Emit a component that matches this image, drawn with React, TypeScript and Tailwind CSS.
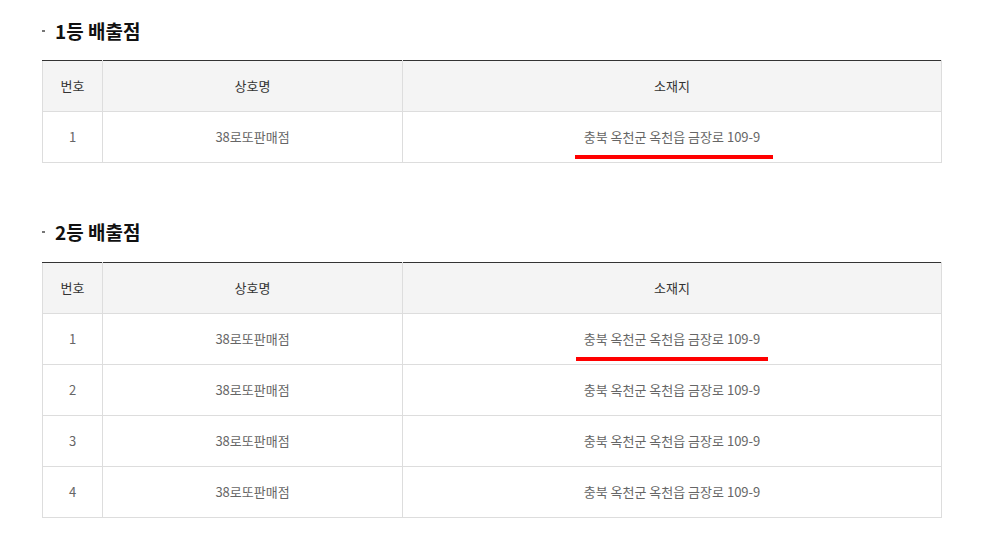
const rows2 = ["1", "2", "3", "4"];

function StoreTable({ rows, marks }: { rows: string[]; marks: Record<string, string> }) {
  return (
    <table className="w-[900px] table-fixed border-collapse border-t border-t-[#333]">
      <colgroup>
        <col className="w-[60px]" />
        <col className="w-[300px]" />
        <col />
      </colgroup>
      <thead>
        <tr className="h-[51px] bg-[#f4f4f4] text-[#333]">
          <th className="border border-[#ddd] border-t-[#333] font-normal">번호</th>
          <th className="border border-[#ddd] border-t-[#333] font-normal">상호명</th>
          <th className="border border-[#ddd] border-t-[#333] font-normal">소재지</th>
        </tr>
      </thead>
      <tbody>
        {rows.map((n) => (
          <tr key={n} className="h-[51px] text-[#666]">
            <td className="border border-[#ddd] text-center">{n}</td>
            <td className="border border-[#ddd] text-center">38로또판매점</td>
            <td className="relative border border-[#ddd] text-center">
              충북 옥천군 옥천읍 금장로 109-9
              {marks[n] && <span className={`absolute bottom-[3px] h-[4px] bg-[#ff0000] ${marks[n]}`} />}
            </td>
          </tr>
        ))}
      </tbody>
    </table>
  );
}

export default function App() {
  return (
    <div className="min-h-[550px] bg-white pl-[42px] text-[13px] font-['Noto_Sans_CJK_KR','Noto_Sans',sans-serif]">
      <h2 className="flex h-[26px] items-center mt-[18px] mb-[16px] text-[19px] font-bold leading-[26px] text-[#111]">
        <span className="mr-[10px] h-[2px] w-[3px] bg-[#777]" />
        1등 배출점
      </h2>
      <StoreTable rows={["1"]} marks={{ "1": "left-[172px] w-[198px]" }} />
      <h2 className="flex h-[26px] items-center mt-[56px] mb-[17px] text-[19px] font-bold leading-[26px] text-[#111]">
        <span className="mr-[10px] h-[2px] w-[3px] bg-[#777]" />
        2등 배출점
      </h2>
      <StoreTable rows={rows2} marks={{ "1": "left-[173px] w-[192px]" }} />
    </div>
  );
}
